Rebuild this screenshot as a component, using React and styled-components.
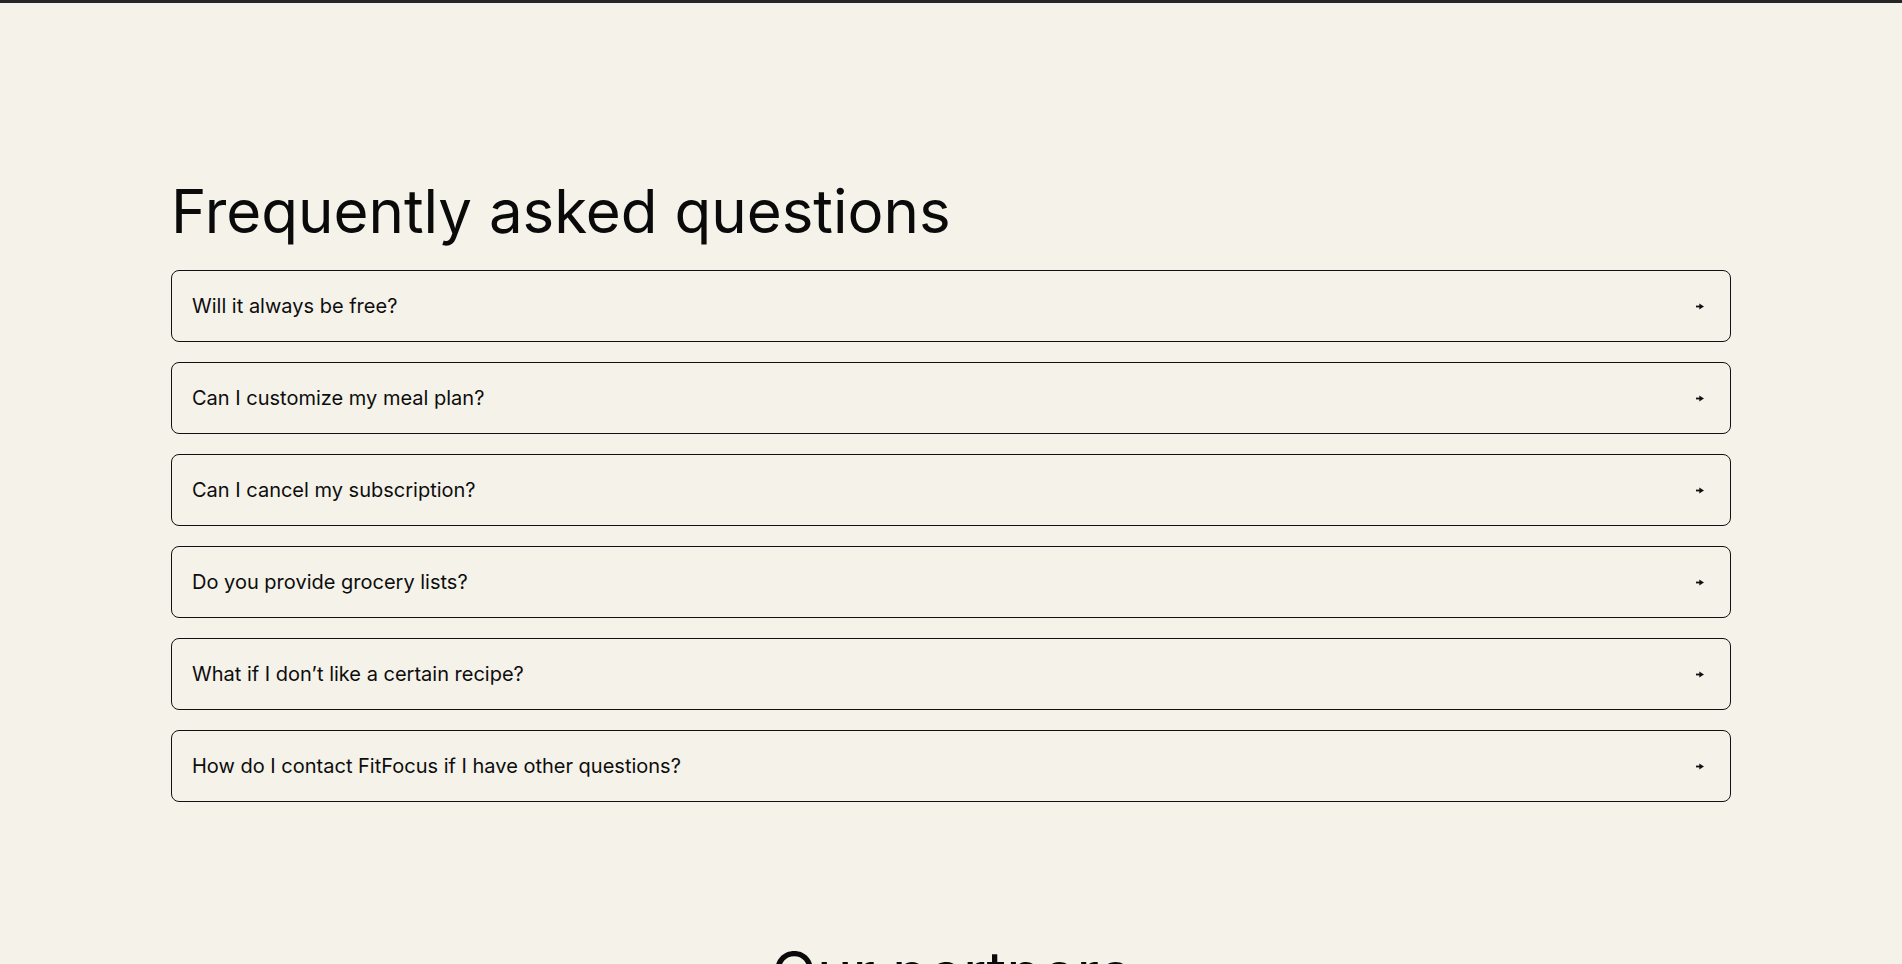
import React from "react";
import styled, { createGlobalStyle } from "styled-components";

const GlobalStyle = createGlobalStyle`
  html { scrollbar-width: none; }
  html::-webkit-scrollbar { display: none; }
  body {
    margin: 0;
    background: #f5f2ea;
    font-family: Inter, "Noto Sans", sans-serif;
    color: #111;
  }
`;

const TopBar = styled.div`
  height: 3px;
  background: #262626;
`;

const Page = styled.main`
  max-width: 1560px;
  margin: 0 auto;
  padding-top: 172px;
`;

const Heading = styled.h2`
  margin: 0 0 ${(p) => (p.$center ? "0" : "23px")};
  font-size: 60px;
  font-weight: 400;
  line-height: 1.2;
  letter-spacing: 0;
  color: #0a0a0a;
  text-align: ${(p) => (p.$center ? "center" : "left")};
`;

const List = styled.div`
  display: flex;
  flex-direction: column;
  gap: 20px;
`;

const Item = styled.button`
  display: flex;
  align-items: center;
  justify-content: space-between;
  width: 100%;
  box-sizing: border-box;
  padding: 23px 26px 23px 20px;
  border: 1px solid #111;
  border-radius: 8px;
  background: transparent;
  font-family: Inter, "Noto Sans", sans-serif;
  font-size: 20px;
  line-height: 24px;
  color: #0d0d0d;
  text-align: left;
  cursor: pointer;
`;

const Partners = styled.section`
  margin-top: 135px;
`;

const Arrow = () => (
  <svg width="8" height="7" viewBox="0 0 8 7" aria-hidden="true">
    <rect x="0" y="2.6" width="4.5" height="1.8" fill="#111" />
    <path d="M3.3 0.4 L8 3.5 L3.3 6.6 Z" fill="#111" />
  </svg>
);

const questions = [
  "Will it always be free?",
  "Can I customize my meal plan?",
  "Can I cancel my subscription?",
  "Do you provide grocery lists?",
  "What if I don\u2019t like a certain recipe?",
  "How do I contact FitFocus if I have other questions?",
];

export default function App() {
  return (
    <>
      <GlobalStyle />
      <TopBar />
      <Page>
        <section>
          <Heading>Frequently asked questions</Heading>
          <List>
            {questions.map((q) => (
              <Item key={q}>
                <span>{q}</span>
                <Arrow />
              </Item>
            ))}
          </List>
        </section>
        <Partners>
          <Heading $center>Our partners</Heading>
        </Partners>
      </Page>
    </>
  );
}
